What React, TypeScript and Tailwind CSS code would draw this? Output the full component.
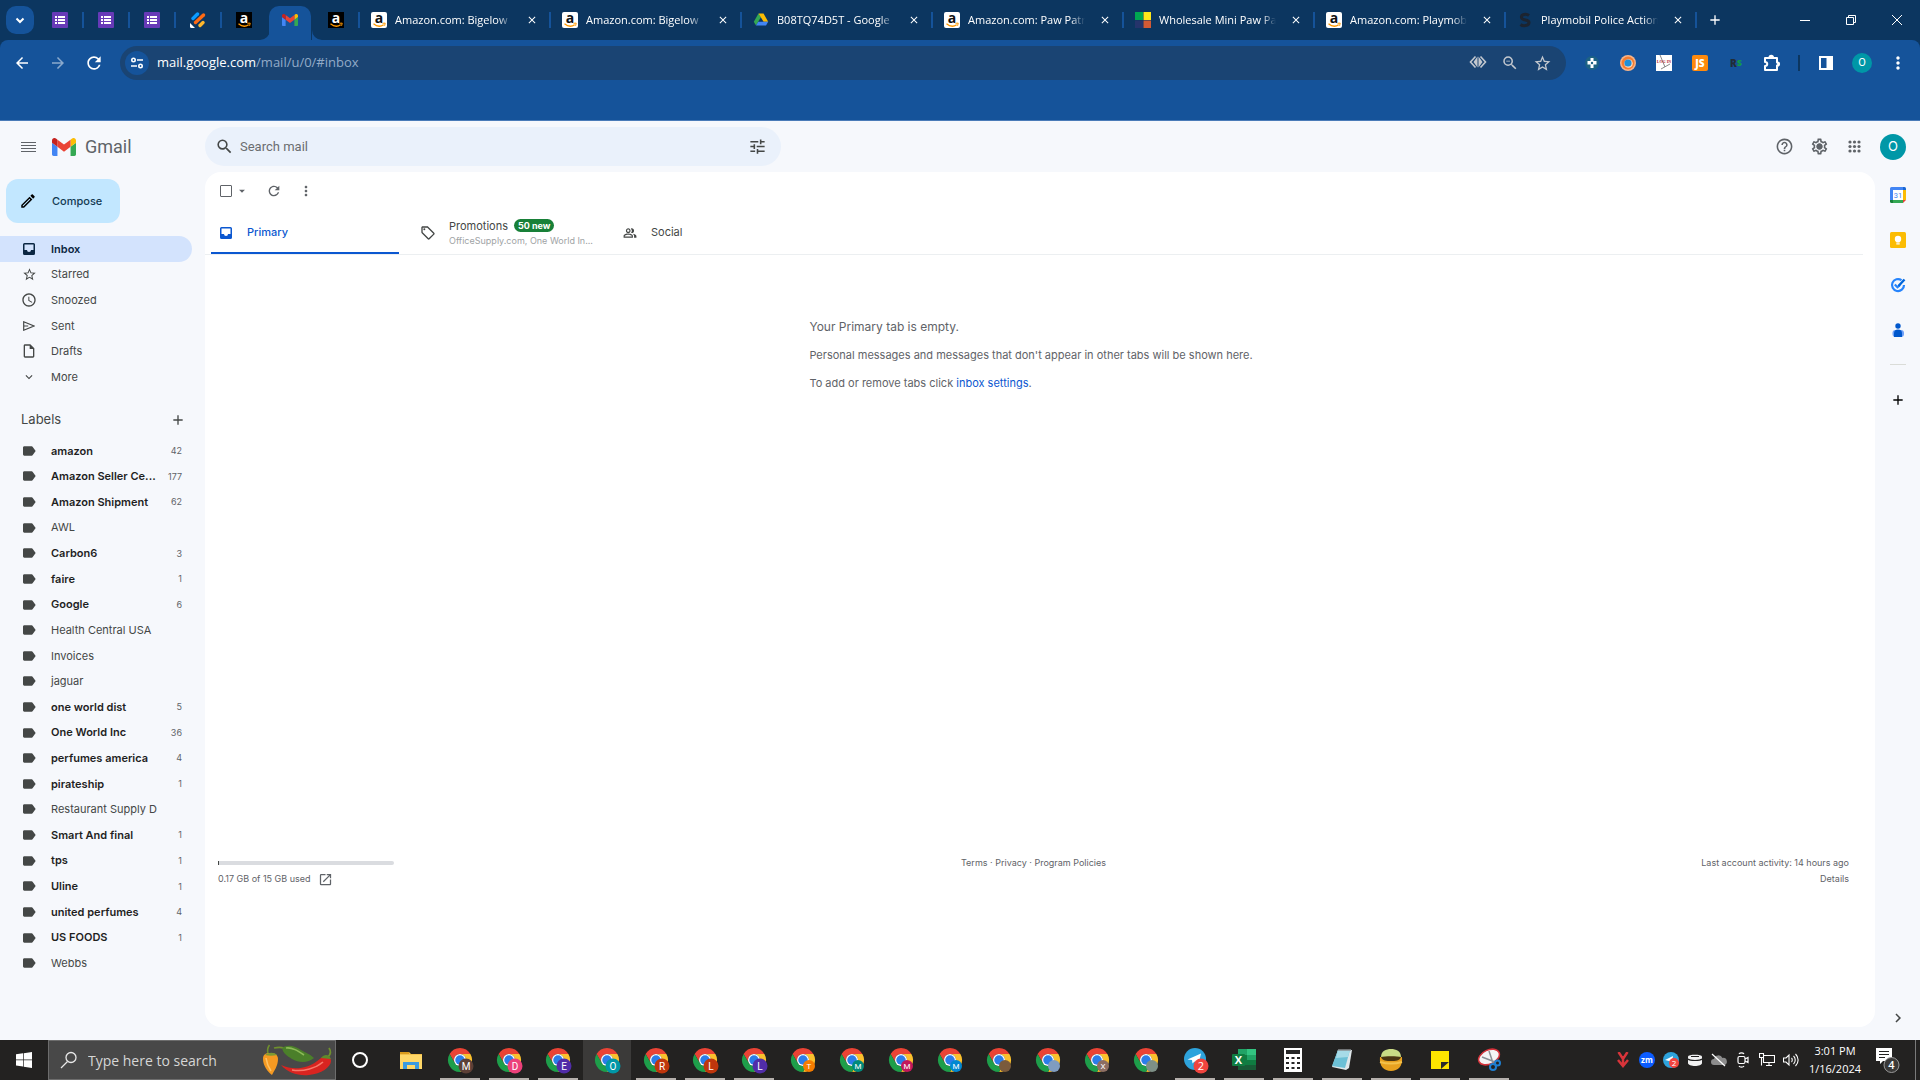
import React from 'react';
import {
  MdAccessTime,
  MdAdd,
  MdArrowBack,
  MdArrowDropDown,
  MdArrowForward,
  MdChevronRight,
  MdClose,
  MdExpandMore,
  MdLabel,
  MdMoreVert,
  MdOutlineEdit,
  MdOutlineHelpOutline,
  MdOutlineInsertDriveFile,
  MdOutlineLocalOffer,
  MdOutlineOpenInNew,
  MdOutlinePeopleAlt,
  MdOutlineSettings,
  MdRefresh,
  MdSearch,
  MdStarBorder,
  MdTune,
  MdZoomOut,
} from 'react-icons/md';

/* ---------- favicons ---------- */

function FormsIcon() {
  return (
    <svg viewBox="0 0 16 16" className="size-4">
      <rect width="16" height="16" rx="1" fill="#673ab7" />
      <path d="M3 4h2v2H3zM6 4h7v2H6zM3 7h2v2H3zM6 7h7v2H6zM3 10h2v2H3zM6 10h7v2H6z" fill="#fff" />
    </svg>
  );
}

function FeedIcon() {
  return (
    <svg viewBox="0 0 16 16" className="size-4" strokeWidth="3.4" strokeLinecap="round">
      <path d="M3 6.5L7.5 2" stroke="#0a9bff" />
      <path d="M5.5 10.5L13.5 3" stroke="#ff6a13" />
      <path d="M10 13.5L13 10.5" stroke="#ffb72b" />
      <path d="M0 11l5 5H1.5A1.5 1.5 0 0 1 0 14.500z" fill="#fff" />
    </svg>
  );
}

function AmazonIcon({ dark = false }: { dark?: boolean }) {
  return (
    <svg viewBox="0 0 16 16" className="size-4 overflow-visible">
      <rect width="16" height="16" rx={dark ? 0 : 2} fill={dark ? '#000' : '#fff'} />
      <text
        x="8"
        y="10.500"
        textAnchor="middle"
        fontFamily="Open Sans, sans-serif"
        fontWeight="700"
        fontSize="14"
        fill={dark ? '#fff' : '#111'}
      >
        a
      </text>
      <path d="M2.500 11.800c3.500 2.900 7.600 2.700 10.200 1" fill="none" stroke="#ff9900" strokeWidth="1.300" />
      <path d="M11.500 11.300l2.700-.2-.6 2.700" fill="none" stroke="#ff9900" strokeWidth="1" />
    </svg>
  );
}

function GmailLogo({ className }: { className: string }) {
  return (
    <svg viewBox="52 42 88 66" className={className}>
      <path fill="#4285f4" d="M58 108h14V74L52 59v43c0 3.320 2.690 6 6 6" />
      <path fill="#34a853" d="M120 108h14c3.320 0 6-2.690 6-6V59l-20 15" />
      <path fill="#fbbc04" d="M120 48v26l20-15v-8c0-7.420-8.470-11.650-14.400-7.200" />
      <path fill="#ea4335" d="M72 74V48l24 18 24-18v26L96 92" />
      <path fill="#c5221f" d="M52 51v8l20 15V48l-5.600-4.200c-5.940-4.450-14.400-.22-14.400 7.200" />
    </svg>
  );
}

function DriveIcon() {
  return (
    <svg viewBox="0 0 16 16" className="size-4">
      <path d="M5.500 1.500L.8 9.700 3 13.500 8 5z" fill="#34a853" />
      <path d="M5.500 1.500h5L15.200 9.700h-4.600z" fill="#fbbc04" />
      <path d="M3 13.500l2.300-3.800h9.900L13 13.500z" fill="#4285f4" />
    </svg>
  );
}

function MosaicIcon() {
  return (
    <svg viewBox="0 0 16 16" className="size-4">
      <path d="M0 0h8v8H0z" fill="#00a651" />
      <path d="M8.500 0H16v8H8.500z" fill="#ffe81a" />
      <path d="M0 8.500h8V16H0z" fill="#25346b" />
      <path d="M8.500 8.500H16V16H8.500z" fill="#d35a35" />
    </svg>
  );
}

function SwirlIcon() {
  return (
    <svg viewBox="0 0 16 16" className="size-4" fill="none" stroke="#1c2430">
      <path d="M12 3.500C9.500 1.500 4 2 4.500 5.500S12 7 12 10.500 6 14.500 3.500 12.500" strokeWidth="3" />
      <path d="M10.500 5C9 3.800 6 4 6.500 5.800" stroke="#0c3660" strokeWidth=".6" />
    </svg>
  );
}

/* ---------- browser chrome ---------- */

const wideTabs = [
  { title: 'Amazon.com: Bigelow', icon: <AmazonIcon /> },
  { title: 'Amazon.com: Bigelow', icon: <AmazonIcon /> },
  { title: 'B08TQ74D5T - Google', icon: <DriveIcon /> },
  { title: 'Amazon.com: Paw Patr', icon: <AmazonIcon /> },
  { title: 'Wholesale Mini Paw Pa', icon: <MosaicIcon /> },
  { title: 'Amazon.com: Playmob', icon: <AmazonIcon /> },
  { title: 'Playmobil Police Action', icon: <SwirlIcon /> },
];

function PinnedTab({ icon, divider = true }: { icon: React.ReactNode; divider?: boolean }) {
  return (
    <div className="flex h-7 w-[46px] items-center">
      <button className="flex flex-1 justify-center">{icon}</button>
      <span className={divider ? 'h-4 w-[2px] bg-[#15539a]' : 'h-4 w-[2px]'} />
    </div>
  );
}

function TabStrip() {
  return (
    <div className="flex h-10 items-center bg-[#0c3660] pl-[6px] text-white">
      <button aria-label="Search tabs" className="mr-1 flex size-7 items-center justify-center rounded-[10px] bg-[#15539a]">
        <svg viewBox="0 0 10 10" className="size-[10px]" fill="none" stroke="#fff" strokeWidth="2">
          <path d="M1.500 3.500L5 7l3.500-3.500" />
        </svg>
      </button>
      <PinnedTab icon={<FormsIcon />} />
      <PinnedTab icon={<FormsIcon />} />
      <PinnedTab icon={<FormsIcon />} />
      <PinnedTab icon={<FeedIcon />} />
      <PinnedTab icon={<AmazonIcon dark />} divider={false} />
      <div className="relative flex h-10 w-[46px] items-end pr-[2px]">
        <button className="mx-px flex h-[34px] flex-1 items-center justify-center rounded-t-[10px] bg-[#15539a] pb-[6px]">
          <GmailLogo className="h-3 w-4" />
        </button>
        <svg viewBox="0 0 10 10" className="absolute bottom-0 -left-2 size-[10px]">
          <path d="M10 0v10H0A10 10 0 0 0 10 0" fill="#15539a" />
        </svg>
        <svg viewBox="0 0 10 10" className="absolute -right-2 bottom-0 size-[10px]">
          <path d="M0 0v10h10A10 10 0 0 1 0 0" fill="#15539a" />
        </svg>
      </div>
      <PinnedTab icon={<AmazonIcon dark />} />
      {wideTabs.map((tab, i) => (
        <div key={i} className="flex h-7 w-[191px] min-w-0 items-center">
          <button className="ml-[11px] flex min-w-0 flex-1 items-center gap-2">
            <span className="shrink-0">{tab.icon}</span>
            <span className="min-w-0 flex-1 text-left font-['Open_Sans',sans-serif] text-[11px] leading-5 whitespace-nowrap [mask-image:linear-gradient(to_right,black_88%,transparent)]">
              {tab.title}
            </span>
          </button>
          <button aria-label="Close tab" className="mr-[9px] ml-3 flex size-4 items-center justify-center">
            <MdClose className="size-3" />
          </button>
          <span className="h-4 w-[2px] bg-[#15539a]" />
        </div>
      ))}
      <button aria-label="New tab" className="ml-[10px] flex size-4 items-center justify-center">
        <MdAdd className="size-4" />
      </button>
      <div className="ml-auto flex">
        <button aria-label="Minimize" className="flex h-10 w-[46px] items-center justify-center">
          <span className="h-px w-[10px] bg-white" />
        </button>
        <button aria-label="Restore" className="flex h-10 w-[46px] items-center justify-center">
          <svg viewBox="0 0 10 10" className="size-[10px]" fill="none" stroke="#fff">
            <path d="M.5 2.500h7v7h-7zM2.500 2.500v-2h7v7h-2" />
          </svg>
        </button>
        <button aria-label="Close" className="flex h-10 w-[46px] items-center justify-center">
          <svg viewBox="0 0 10 10" className="size-[10px]" stroke="#fff">
            <path d="M0 0l10 10M10 0L0 10" />
          </svg>
        </button>
      </div>
    </div>
  );
}

function ToolButton({ label, children }: { label: string; children: React.ReactNode }) {
  return (
    <button aria-label={label} className="flex h-8 w-9 items-center justify-center">
      {children}
    </button>
  );
}

function Toolbar() {
  return (
    <div className="h-[81px] border-b border-[#4a7bb8] bg-[#0c3660]">
      <div className="flex h-20 items-start rounded-t-lg bg-[#15539a] pt-[6px] pl-1 text-white">
        <div className="flex h-[34px] items-center">
          <ToolButton label="Back"><MdArrowBack className="size-[18px]" /></ToolButton>
          <ToolButton label="Forward"><MdArrowForward className="size-[18px] opacity-50" /></ToolButton>
          <ToolButton label="Reload"><MdRefresh className="size-5" /></ToolButton>
        </div>
        <div className="ml-2 flex h-[34px] flex-1 items-center rounded-full bg-[#1a4473] pl-[5px]">
          <button aria-label="Site information" className="flex size-6 items-center justify-center rounded-full bg-[#15539a]">
            <svg viewBox="0 0 14 14" className="size-[14px]" fill="none" stroke="#fff" strokeWidth="1.600">
              <circle cx="3.500" cy="4" r="1.700" />
              <path d="M7 4h6M1 10h6" />
              <circle cx="10.500" cy="10" r="1.700" />
            </svg>
          </button>
          {/* typed url, with the path dimmed */}
          <div className="ml-2 flex-1 font-['Open_Sans',sans-serif] text-[13px]">
            mail.google.com<span className="text-[#93abc8]">/mail/u/0/#inbox</span>
          </div>
          <div className="mr-2 flex text-[#c3c8cf]">
            <button aria-label="Sync" className="flex w-8 justify-center">
              <svg viewBox="0 0 18 16" className="h-4 w-[18px]" fill="none" stroke="currentColor" strokeWidth="1.600">
                <path d="M6.500 2.500L1.500 8l5 5.500M11.500 2.500l5 5.500-5 5.500" />
                <path d="M8.500 2.500L4.500 8l4 5.500zM9.500 2.500L13.500 8l-4 5.500z" fill="currentColor" stroke="none" />
              </svg>
            </button>
            <button aria-label="Zoom" className="flex w-8 justify-center"><MdZoomOut className="size-[18px]" /></button>
            <button aria-label="Bookmark" className="flex w-8 justify-center"><MdStarBorder className="size-[19px]" /></button>
          </div>
        </div>
        <div className="ml-2 flex h-[34px] items-center pr-1">
          <ToolButton label="Helium extension">
            <svg viewBox="0 0 16 16" className="size-4">
              <circle cx="8" cy="8" r="7" fill="#1d6284" />
              <path d="M6.500 3h3v3h3v3.500h-3V13h-3V9.500h-3V6h3z" fill="#fff" />
              <circle cx="8" cy="8" r="1.200" fill="#1d6284" />
            </svg>
          </ToolButton>
          <ToolButton label="Fox extension">
            <svg viewBox="0 0 16 16" className="size-4">
              <circle cx="8" cy="8" r="8" fill="#f7b58a" />
              <circle cx="8" cy="8" r="6.500" fill="#f47d31" />
              <circle cx="8.500" cy="8.500" r="4.300" fill="#fcd9bd" />
              <circle cx="8" cy="8" r="3.600" fill="#1e8fd8" />
            </svg>
          </ToolButton>
          <ToolButton label="Log in extension">
            <svg viewBox="0 0 16 16" className="size-4">
              <rect width="16" height="16" fill="#fff" />
              <path d="M4 0l5 12M5 14l9-5" stroke="#888" strokeWidth="1" />
              <text x="8" y="8" textAnchor="middle" fontSize="4" fontWeight="700" fontFamily="Liberation Serif, serif" fill="#b3202a">
                LOG IN
              </text>
            </svg>
          </ToolButton>
          <ToolButton label="JS extension">
            <span className="flex size-4 items-center justify-center rounded-xs bg-[#ff8a0c] font-['Open_Sans',sans-serif] text-[10px] font-extrabold">
              JS
            </span>
          </ToolButton>
          <ToolButton label="RS extension">
            <span className="flex font-['Open_Sans',sans-serif] text-[10px] leading-4 font-extrabold text-[#222c35]">
              R<span className="text-[9px] text-[#129a45]">S</span>
            </span>
          </ToolButton>
          <ToolButton label="Extensions">
            <svg viewBox="0 0 18 18" className="size-[18px]" fill="none" stroke="#fff" strokeWidth="2" strokeLinejoin="round">
              <path d="M2 4h12v4.500a1.500 1.500 0 0 1 0 3V16H2v-4c3 0 3-4 0-4z" />
              <path d="M6.500 3.500a1.800 1.800 0 0 1 3.600 0M14.500 8.500a1.600 1.600 0 0 1 0 3.200" fill="#fff" />
            </svg>
          </ToolButton>
          <span className="mx-2 h-4 w-[2px] bg-[#0c3660]" />
          <ToolButton label="Side panel">
            <svg viewBox="0 0 16 16" className="size-4">
              <path d="M2 2h12v12H2z" fill="none" stroke="#fff" strokeWidth="2" />
              <path d="M8.500 2H14v12H8.500z" fill="#fff" />
            </svg>
          </ToolButton>
          <ToolButton label="Profile">
            <span className="flex size-5 items-center justify-center rounded-full bg-[#0097a7] font-['Roboto',sans-serif] text-[11px]">O</span>
          </ToolButton>
          <ToolButton label="Browser menu"><MdMoreVert className="size-5" /></ToolButton>
        </div>
      </div>
    </div>
  );
}

/* ---------- gmail ---------- */

function InboxIcon() {
  return (
    <svg viewBox="0 0 12 12" className="size-3">
      <path
        fillRule="evenodd"
        d="M1.500 0h9A1.500 1.500 0 0 1 12 1.500v9a1.500 1.500 0 0 1-1.500 1.500h-9A1.500 1.500 0 0 1 0 10.500v-9A1.500 1.500 0 0 1 1.500 0M1.500 1.500V7H4a2 2 0 0 0 4 0h2.500V1.500z"
        fill="currentColor"
      />
    </svg>
  );
}

function SentIcon() {
  return (
    <svg viewBox="0 0 12 10" className="h-[10px] w-3" fill="none" stroke="currentColor" strokeWidth="1.200">
      <path d="M.7.800L11 5 .7 9.200zM.7 5h4.500" />
    </svg>
  );
}

function Header() {
  return (
    <header className="flex h-[51px] items-center">
      <div className="flex w-[205px] items-center">
        <button aria-label="Main menu" className="ml-[21px]">
          <svg viewBox="0 0 15 10" className="h-[10px] w-[15px]" stroke="#5f6368">
            <path d="M0 .5h15M0 3.500h15M0 6.500h15M0 9.500h15" />
          </svg>
        </button>
        <a href="#inbox" className="ml-4 flex items-center gap-[9px]">
          <GmailLogo className="h-[18px] w-6" />
          <span className="font-['Roboto',sans-serif] text-lg leading-6 text-[#5f6368]">Gmail</span>
        </a>
      </div>
      <form className="flex h-[39px] w-[30%] items-center rounded-full bg-[#eaf1fb]">
        <button type="button" aria-label="Search" className="ml-[10px]">
          <MdSearch className="size-[19px] text-[#444746]" />
        </button>
        <input
          aria-label="Search mail"
          placeholder="Search mail"
          className="ml-[6px] min-w-0 flex-1 bg-transparent font-['Roboto',sans-serif] text-[13px] outline-none placeholder:text-[#6a6d70]"
        />
        <button type="button" aria-label="Search options" className="mr-[14px]">
          <MdTune className="size-[19px] text-[#444746]" />
        </button>
      </form>
      <div className="ml-auto flex items-center pr-[14px] text-[#5f6368]">
        <button aria-label="Support" className="flex w-[35px] justify-center"><MdOutlineHelpOutline className="size-[19px]" /></button>
        <button aria-label="Settings" className="flex w-[35px] justify-center">
          <svg viewBox="0 0 24 24" className="size-[19px]">
            <MdOutlineSettings size={24} />
            <circle cx="12" cy="12" r="3.500" fill="currentColor" />
          </svg>
        </button>
        <button aria-label="Google apps" className="flex w-[35px] justify-center">
          <svg viewBox="0 0 13 13" className="size-[13px]" fill="currentColor">
            {[2, 6.5, 11].map((y) => [2, 6.5, 11].map((x) => <circle key={x + '-' + y} cx={x} cy={y} r="1.600" />))}
          </svg>
        </button>
        <button aria-label="Account" className="ml-2 flex size-[26px] items-center justify-center rounded-full bg-[#0097a7] text-[13px] text-white">
          O
        </button>
      </div>
    </header>
  );
}

const folders = [
  { name: 'Inbox', icon: <InboxIcon />, active: true },
  { name: 'Starred', icon: <MdStarBorder className="size-[15px]" /> },
  { name: 'Snoozed', icon: <MdAccessTime className="size-4" /> },
  { name: 'Sent', icon: <SentIcon /> },
  { name: 'Drafts', icon: <MdOutlineInsertDriveFile className="size-4" /> },
  { name: 'More', icon: <MdExpandMore className="size-[14px]" /> },
];

const labels: { name: string; count?: number }[] = [
  { name: 'amazon', count: 42 },
  { name: 'Amazon Seller Ce...', count: 177 },
  { name: 'Amazon Shipment', count: 62 },
  { name: 'AWL' },
  { name: 'Carbon6', count: 3 },
  { name: 'faire', count: 1 },
  { name: 'Google', count: 6 },
  { name: 'Health Central USA' },
  { name: 'Invoices' },
  { name: 'jaguar' },
  { name: 'one world dist', count: 5 },
  { name: 'One World Inc', count: 36 },
  { name: 'perfumes america', count: 4 },
  { name: 'pirateship', count: 1 },
  { name: 'Restaurant Supply D' },
  { name: 'Smart And final', count: 1 },
  { name: 'tps', count: 1 },
  { name: 'Uline', count: 1 },
  { name: 'united perfumes', count: 4 },
  { name: 'US FOODS', count: 1 },
  { name: 'Webbs' },
];

function Sidebar() {
  return (
    <aside className="w-[205px] shrink-0 text-[11px] text-[#444746]">
      <button className="mt-[7px] ml-[6px] flex h-11 w-[114px] items-center gap-[15px] rounded-xl bg-[#c2e7ff] pl-[13px] font-medium text-[#123a52]">
        <MdOutlineEdit className="size-[18px] text-black" />
        Compose
      </button>
      <nav className="mt-[13px] grid h-[154px] auto-rows-fr">
        {folders.map((f) => (
          <a
            key={f.name}
            href={'#' + f.name.toLowerCase()}
            className={
              f.active
                ? 'flex w-48 items-center gap-[13px] rounded-r-full bg-[#d3e3fd] pl-5 font-semibold text-[#0b2742]'
                : 'flex w-48 items-center gap-[13px] pl-5'
            }
          >
            <span className="flex w-[18px] justify-center">{f.icon}</span>
            {f.name}
          </a>
        ))}
      </nav>
      <div className="mt-[14px] flex h-8 items-center justify-between pr-[19px] pl-[21px]">
        <h2 className="text-[13px]">Labels</h2>
        <button aria-label="Create new label"><MdAdd className="size-4" /></button>
      </div>
      <nav className="mt-[2px] grid h-[538px] auto-rows-fr">
        {labels.map((l) => (
          <a key={l.name} href="#label" className="flex w-48 items-center gap-[13px] pr-[10px] pl-5">
            <span className="flex w-[18px] justify-center"><MdLabel className="size-4" /></span>
            <span className={l.count ? 'flex-1 font-semibold whitespace-nowrap text-[#1f1f1f]' : 'flex-1 whitespace-nowrap'}>{l.name}</span>
            {l.count && <span className="-ml-3 text-[9px] text-[#5f6368]">{l.count}</span>}
          </a>
        ))}
      </nav>
    </aside>
  );
}

function Mailbox() {
  return (
    <main className="mb-[13px] flex-1 rounded-2xl bg-white">
      <div className="flex h-9 items-center pt-[2px] pl-[15px] text-[#5f6368]">
        <input
          type="checkbox"
          aria-label="Select"
          className="size-3 appearance-none rounded-[1px] border border-[#5f6368] bg-white"
        />
        <button aria-label="Select options" className="ml-[3px]"><MdArrowDropDown className="size-[14px]" /></button>
        <button aria-label="Refresh" className="ml-[17px]"><MdRefresh className="size-4" /></button>
        <button aria-label="More" className="ml-4"><MdMoreVert className="size-4" /></button>
      </div>
      <div role="tablist" className="mr-3 flex h-[47px] gap-[14px] border-b border-[#eceff1] pl-[6px] text-[11px] text-[#444746]">
        <button role="tab" aria-selected="true" className="flex w-[188px] items-center gap-[15px] border-b-2 border-[#0b57d0] pt-[5px] pl-[9px] font-medium text-[#0b57d0]">
          <InboxIcon />
          Primary
        </button>
        <button role="tab" aria-selected="false" className="flex w-[188px] items-center gap-[13px] pt-[3px] pl-[7px] text-left">
          <MdOutlineLocalOffer className="size-4 shrink-0" />
          <span className="leading-4">
            <span className="flex items-center gap-[6px]">
              Promotions
              <span className="rounded-full bg-[#188038] px-1 text-[9px] leading-[13px] font-bold text-white">50 new</span>
            </span>
            <span className="block text-[9px] leading-[14px] whitespace-nowrap text-[#a0a3a5]">OfficeSupply.com, One World In...</span>
          </span>
        </button>
        <button role="tab" aria-selected="false" className="flex w-[188px] items-center gap-[14px] pt-[3px] pl-2">
          <MdOutlinePeopleAlt className="size-[14px]" />
          Social
        </button>
      </div>
      <div className="mx-auto mt-[62px] w-fit space-y-2 pr-[18px] text-[11px] leading-5 text-[#5f6368]">
        <p className="text-xs leading-5">Your Primary tab is empty.</p>
        <p>Personal messages and messages that don't appear in other tabs will be shown here.</p>
        <p>
          To add or remove tabs click <a href="#settings" className="text-[#0b57d0]">inbox settings</a>.
        </p>
      </div>
      <footer className="mt-[462px] grid grid-cols-3 pr-[26px] pl-[13px] text-[9px] leading-4 text-[#5f6368]">
        <div>
          <div className="flex h-4 items-center">
            <div className="h-1 w-44 rounded-r-full border-l border-[#444746] bg-[#dadce0]" />
          </div>
          <div className="flex items-center gap-[7px]">
            0.17 GB of 15 GB used
            <a href="#storage" aria-label="Manage storage"><MdOutlineOpenInNew className="size-[15px]" /></a>
          </div>
        </div>
        <div className="text-center">
          <a href="#terms">Terms</a> · <a href="#privacy">Privacy</a> · <a href="#policies">Program Policies</a>
        </div>
        <div className="text-right">
          <p>Last account activity: 14 hours ago</p>
          <a href="#details">Details</a>
        </div>
      </footer>
    </main>
  );
}

function PanelButton({ label, children }: { label: string; children: React.ReactNode }) {
  return (
    <button aria-label={label} className="flex h-[45px] w-full items-center justify-center">
      {children}
    </button>
  );
}

function SidePanel() {
  return (
    <aside className="flex w-[45px] shrink-0 flex-col items-center">
      <PanelButton label="Calendar">
        <svg viewBox="0 0 16 16" className="size-4">
          <path d="M0 1.500A1.500 1.500 0 0 1 1.500 0H13v3H3v10H0z" fill="#4285f4" />
          <path d="M13 0h1.500A1.500 1.500 0 0 1 16 1.500V3h-3z" fill="#1967d2" />
          <path d="M13 3h3v10h-3z" fill="#fbbc04" />
          <path d="M0 13h3v3H1.500A1.500 1.500 0 0 1 0 14.500z" fill="#188038" />
          <path d="M3 13h10v3H3z" fill="#34a853" />
          <path d="M13 13h3l-3 3z" fill="#ea4335" />
          <path d="M3 3h10v10H3z" fill="#fff" />
          <text x="8" y="10.800" textAnchor="middle" fontSize="7.500" fontFamily="Roboto, sans-serif" fill="#4285f4">31</text>
        </svg>
      </PanelButton>
      <PanelButton label="Keep">
        <svg viewBox="0 0 16 16" className="size-4">
          <rect width="16" height="16" rx="1.500" fill="#fbbc04" />
          <circle cx="8" cy="7" r="3.200" fill="#fff" />
          <path d="M6.300 9h3.400v1.600H6.300zM6.300 11.200h3.400v1.300H6.300z" fill="#fff" />
        </svg>
      </PanelButton>
      <PanelButton label="Tasks">
        <svg viewBox="0 0 16 16" className="size-4" fill="none">
          <path d="M11.500 3.200A6 6 0 1 0 14 8" stroke="#2684fc" strokeWidth="2.200" />
          <path d="M4.800 7.500L7.500 10.200 10 8" stroke="#2684fc" strokeWidth="2.200" />
          <path d="M8.500 9L14.500 2.500" stroke="#0066da" strokeWidth="2.400" />
        </svg>
      </PanelButton>
      <PanelButton label="Contacts">
        <svg viewBox="0 0 16 16" className="size-4">
          <circle cx="8" cy="4" r="2.700" fill="#0057cc" />
          <rect x="2.500" y="8" width="11.500" height="7" rx="3" fill="#6ea0f8" />
          <path d="M4 15v-3.500A4 4 0 0 1 12 11.500V15z" fill="#0057cc" />
        </svg>
      </PanelButton>
      <span className="mt-3 h-px w-4 bg-[#dadcd8]" />
      <div className="mt-3 w-full">
        <PanelButton label="Get add-ons"><MdAdd className="size-4 text-black" /></PanelButton>
      </div>
      <button aria-label="Hide side panel" className="mt-auto mb-[13px]"><MdChevronRight className="size-[18px] text-[#444746]" /></button>
    </aside>
  );
}

/* ---------- taskbar ---------- */

function ChromeIcon({ letter, color, small }: { letter: string; color: string; small?: boolean }) {
  return (
    <svg viewBox="0 0 32 32" className="size-8">
      <g transform="translate(4 4) scale(.5)">
        <path d="M24 12H44.800A24 24 0 0 0 3.200 12L13.600 30A12 12 0 0 1 24 12Z" fill="#ea4335" />
        <path d="M44.800 12H24A12 12 0 0 1 34.400 30L24 48A24 24 0 0 0 44.800 12" fill="#fbc02d" />
        <path d="M3.200 12L13.600 30A12 12 0 0 0 34.400 30L24 48A24 24 0 0 1 3.200 12" fill="#1e9e4a" />
        <circle cx="24" cy="24" r="12" fill="#fff" />
        <circle cx="24" cy="24" r="9.500" fill="#2b7de9" />
      </g>
      <circle cx="22" cy="22" r={small ? 6 : 7.5} fill={color} />
      <text x="22" y={small ? 25 : 26} textAnchor="middle" fontSize={small ? 8 : 10} fontFamily="Roboto, sans-serif" fill="#fff">
        {letter}
      </text>
    </svg>
  );
}

function PeppersIcon() {
  return (
    <svg viewBox="0 0 72 36" className="h-9 w-[72px]" fill="none">
      <path d="M6 12C5 8 6 5 7.500 3" stroke="#6f8f2e" strokeWidth="1.600" />
      <path d="M1 17c0-5 3-6 7-6 5 0 8 2 8 6 0 7-4 12-6 16C6 30 1 24 1 17" fill="#f59a22" />
      <path d="M4 16c1 7 3 10 5 13" stroke="#ffc263" strokeWidth="1.600" />
      <path d="M3 13c4-3 9-3 12 0-4 1-8 1-12 0" fill="#7d9a33" />
      <path d="M12 6c4-1 7-1 10 0" stroke="#6f8f2e" strokeWidth="1.800" />
      <path d="M20 6c6-4 13-2 19 2 5 3 9 4 13 8-6 5-15 5-22 1-5-3-9-6-10-11" fill="#4b7f2a" />
      <path d="M24 6c6-1 12 3 18 7" stroke="#8dbb57" strokeWidth="1.600" />
      <path d="M66 15c3-3 3-6 1-9" stroke="#6f8f2e" strokeWidth="1.800" />
      <path d="M59 16c5-4 10-1 10 3 0 6-10 13-22 14-11 1-21-2-28-10 9 4 17 4 24 2 8-2 11-5 16-9" fill="#d92420" />
      <path d="M30 28c12 2 24-2 31-8" stroke="#f7786a" strokeWidth="1.600" />
      <path d="M59 16c3-4 8-4 10 1-4 0-6-1-10-1" fill="#5d8a2c" />
    </svg>
  );
}

const apps: { name: string; icon: React.ReactNode; open?: boolean; active?: boolean }[] = [
  {
    name: 'File Explorer',
    icon: (
      <svg viewBox="0 0 24 24" className="size-6">
        <path d="M1 4h9l2 2h11v15H1z" fill="#f3c14b" />
        <path d="M1 7h22v14H1z" fill="#ffd868" />
        <path d="M1 4h9v2H1z" fill="#d99b1c" />
        <path d="M4 21v-7h16v7h-4v-4H8v4z" fill="#3a9be0" />
      </svg>
    ),
  },
  { name: 'Chrome M', icon: <ChromeIcon letter="M" color="#5d4037" />, open: true },
  { name: 'Chrome D', icon: <ChromeIcon letter="D" color="#ec407a" />, open: true },
  { name: 'Chrome E', icon: <ChromeIcon letter="E" color="#512da8" />, open: true },
  { name: 'Chrome O', icon: <ChromeIcon letter="O" color="#0097a7" />, active: true },
  { name: 'Chrome R', icon: <ChromeIcon letter="R" color="#bf360c" />, open: true },
  { name: 'Chrome L', icon: <ChromeIcon letter="L" color="#bf360c" />, open: true },
  { name: 'Chrome L2', icon: <ChromeIcon letter="L" color="#512da8" />, open: true },
  { name: 'Chrome T', icon: <ChromeIcon letter="T" color="#f57c00" small /> },
  { name: 'Chrome M2', icon: <ChromeIcon letter="M" color="#00897b" small /> },
  { name: 'Chrome M3', icon: <ChromeIcon letter="M" color="#c2185b" small /> },
  { name: 'Chrome M4', icon: <ChromeIcon letter="M" color="#0288d1" small /> },
  { name: 'Chrome photo', icon: <ChromeIcon letter="" color="#7a5a3c" small /> },
  { name: 'Chrome cat', icon: <ChromeIcon letter="" color="#7f9cc0" small /> },
  { name: 'Chrome X', icon: <ChromeIcon letter="X" color="#8d6e63" small /> },
  { name: 'Chrome beach', icon: <ChromeIcon letter="" color="#7d8f86" small /> },
  {
    name: 'Telegram',
    open: true,
    icon: (
      <svg viewBox="0 0 32 32" className="size-8">
        <circle cx="16" cy="15" r="11" fill="#2ea3dc" />
        <path d="M8.500 15.500L22 9.500l-2.500 11-4-3-2 2-.5-3.500z" fill="#fff" />
        <circle cx="22" cy="22" r="7.500" fill="#f0443e" />
        <text x="22" y="26" textAnchor="middle" fontSize="11" fontFamily="Open Sans, sans-serif" fill="#fff">2</text>
      </svg>
    ),
  },
  {
    name: 'Excel',
    open: true,
    icon: (
      <svg viewBox="0 0 24 24" className="size-6">
        <path d="M6 1h9v6H6z" fill="#21a366" />
        <path d="M15 1h9v6h-9z" fill="#33c481" />
        <path d="M6 7h9v10H6z" fill="#107c41" />
        <path d="M15 7h9v5h-9z" fill="#21a366" />
        <path d="M15 12h9v5h-9z" fill="#107c41" />
        <path d="M6 17h18v5H6z" fill="#185c37" />
        <rect y="6" width="13" height="12" rx="1" fill="#107c41" />
        <text x="6.500" y="16" textAnchor="middle" fontSize="11" fontWeight="700" fontFamily="Open Sans, sans-serif" fill="#fff">X</text>
      </svg>
    ),
  },
  {
    name: 'Calculator',
    open: true,
    icon: (
      <svg viewBox="0 0 18 24" className="h-6 w-[18px]">
        <path d="M0 0h18v24H0z" fill="#fff" />
        <path d="M2 2h14v4H2zM2 9h3v2H2zM7.500 9h3v2h-3zM13 9h3v2h-3zM2 14h3v2H2zM7.500 14h3v2h-3zM13 14h3v2h-3zM2 19h3v2H2zM7.500 19h3v2h-3zM13 19h3v2h-3z" fill="#262626" />
      </svg>
    ),
  },
  {
    name: 'Notepad',
    open: true,
    icon: (
      <svg viewBox="0 0 24 24" className="size-6">
        <path d="M8 2h14l-3 18-3 2-14-3z" fill="#dfe7ea" />
        <path d="M8 2h12l-5 18-13-2z" fill="#6cc0d6" />
        <path d="M8 2h12l-2 7-12 1z" fill="#a6dbe8" />
        <path d="M8 2h13" stroke="#8b8f92" strokeWidth="1.500" />
      </svg>
    ),
  },
  {
    name: 'Buyer app',
    open: true,
    icon: (
      <svg viewBox="0 0 24 24" className="size-6">
        <path d="M2 9C2 3 7 1 12 1s10 2 10 8z" fill="#c9db85" />
        <path d="M1 9h22c1 9-4 14-11 14S0 18 1 9" fill="#e8a11f" />
        <path d="M1 14c7 2 15 2 22 0" stroke="#f4c14a" strokeWidth="2" fill="none" />
        <path d="M2 9c4-1 16-1 20 0-1 4-6 4-10 4S3 13 2 9" fill="#4a3512" />
      </svg>
    ),
  },
  {
    name: 'Sticky Notes',
    open: true,
    icon: (
      <svg viewBox="0 0 18 18" className="size-[18px]">
        <path d="M0 0h18v18H0z" fill="#ffe600" />
        <path d="M10 18v-7h8z" fill="#2b2b2b" />
        <path d="M12 18l6-6v6z" fill="#ffe600" />
      </svg>
    ),
  },
  {
    name: 'Snipping Tool',
    open: true,
    icon: (
      <svg viewBox="0 0 24 24" className="size-6" fill="none">
        <ellipse cx="12" cy="9" rx="11" ry="7" transform="rotate(-25 12 9)" fill="#f4f4f4" stroke="#d6333b" strokeWidth="1.500" />
        <path d="M12 3l4 12M5 9l13 5" stroke="#8a8f94" strokeWidth="1.500" />
        <circle cx="16" cy="19" r="3" stroke="#1f7fd1" strokeWidth="2" />
        <circle cx="20.500" cy="15" r="2.500" stroke="#1f7fd1" strokeWidth="2" />
      </svg>
    ),
  },
];

const tray = [
  <svg viewBox="0 0 16 16" className="size-4" fill="none" stroke="#d8343a" strokeWidth="2.500">
    <path d="M3.500 0L8 7l4.500-7M3 8l5 6 5-6M8 4v9" />
  </svg>,
  <span className="flex size-4 items-center justify-center rounded-full bg-[#0b5cff] font-['Open_Sans',sans-serif] text-[8px] leading-3 font-bold">zm</span>,
  <svg viewBox="0 0 16 16" className="size-4">
    <circle cx="8" cy="8" r="8" fill="#2ea3dc" />
    <path d="M2 8l8-4-1 7-3-2z" fill="#fff" />
    <circle cx="11" cy="11" r="5" fill="#f0443e" />
    <text x="11" y="14" textAnchor="middle" fontSize="8" fontFamily="Open Sans, sans-serif" fill="#fff">2</text>
  </svg>,
  <svg viewBox="0 0 16 16" className="size-4">
    <path d="M1 4.500C1 2 15 2 15 4.500V11c0 4-14 4-14 0z" fill="#f2f2f2" />
    <path d="M1 7c2 2 12 2 14 0" stroke="#222" strokeWidth="1.200" fill="none" />
    <path d="M4 4.500h8" stroke="#222" strokeWidth="1" />
  </svg>,
  <svg viewBox="0 0 16 16" className="size-4">
    <path d="M3 13a3 3 0 0 1 0-6 4.500 4.500 0 0 1 8.500-1A3.500 3.500 0 0 1 13 13z" fill="#8c8c8c" />
    <path d="M1 2l13 12" stroke="#fff" strokeWidth="1.200" />
  </svg>,
  <svg viewBox="0 0 16 16" className="size-4" fill="none" stroke="#fff" strokeWidth="1.200">
    <rect x="3" y="4.500" width="7" height="7" rx="1.500" />
    <path d="M10 7l3-1.500v5L10 9M4 2c1-1.500 4-1.500 5 0M4 14c1 1.500 4 1.500 5 0" />
  </svg>,
  <svg viewBox="0 0 16 16" className="size-4" fill="none" stroke="#fff" strokeWidth="1.100">
    <path d="M4.500 3.500h11v7h-11zM10 10.500v3M7 13.500h6M.500 1.500h4v4h-4zM2.500 5.500v8" />
  </svg>,
  <svg viewBox="0 0 16 16" className="size-4" fill="none" stroke="#fff" strokeWidth="1.100">
    <path d="M.5 6h2.500l3-3v10l-3-3H.500zM8.500 6c1 1 1 3 0 4M10.500 4c2.300 2 2.300 6 0 8M12.500 2c3.500 3.500 3.500 8.500 0 12" />
  </svg>,
];

function Taskbar() {
  return (
    <div className="flex h-10 items-stretch bg-[#232221] font-['Open_Sans',sans-serif] text-white">
      <button aria-label="Start" className="flex w-12 items-center justify-center">
        <svg viewBox="0 0 16 16" className="size-4" fill="#fff">
          <path d="M0 2.300L7 1.300v6.200H0zM7.700 1.200L16 0v7.500H7.700zM0 8.300h7v6.300l-7-1zM7.700 8.300H16V16l-8.300-1.200z" />
        </svg>
      </button>
      <label className="flex w-[288px] items-center border border-[#6d6d6d] bg-[#484848] pr-px">
        <svg viewBox="0 0 18 18" className="ml-[11px] size-[18px]" fill="none" stroke="#e8e8e8" strokeWidth="1.300">
          <circle cx="11" cy="6.500" r="5" />
          <path d="M7.500 10.500L1 17" />
        </svg>
        <input
          aria-label="Search Windows"
          placeholder="Type here to search"
          className="ml-[10px] min-w-0 flex-1 bg-transparent pt-[2px] text-sm outline-none placeholder:text-[#d6d6d6]"
        />
        <PeppersIcon />
      </label>
      <button aria-label="Cortana" className="flex w-12 items-center justify-center">
        <span className="size-4 rounded-full border-2 border-white" />
      </button>
      <div className="ml-[3px] flex gap-px">
        {apps.map((app) => (
          <button
            key={app.name}
            aria-label={app.name}
            className={app.active ? 'relative flex w-12 items-center justify-center bg-[#3b3a39]' : 'relative flex w-12 items-center justify-center'}
          >
            {app.icon}
            {app.open && <span className="absolute inset-x-1 bottom-0 h-[2px] bg-[#b5b0ac]" />}
          </button>
        ))}
      </div>
      <div className="ml-auto flex items-center">
        {tray.map((icon, i) => (
          <button key={i} aria-label="Tray item" className="flex w-6 justify-center">{icon}</button>
        ))}
      </div>
      <button className="w-16 text-center text-[11px] leading-[18px] whitespace-nowrap">
        3:01 PM
        <br />
        1/16/2024
      </button>
      <button aria-label="Notifications" className="flex w-10 items-center justify-center">
        <svg viewBox="0 0 26 26" className="size-[26px]">
          <path d="M2 1h16v13H9l-3 3v-3H2z" fill="#fff" />
          <path d="M5 4.500h10M5 7.500h10M5 10.500h6" stroke="#232221" strokeWidth="1.200" />
          <circle cx="17.500" cy="18" r="7.500" fill="#3a3938" stroke="#9a9a9a" />
          <text x="17.500" y="22" textAnchor="middle" fontSize="11" fontWeight="600" fontFamily="Open Sans, sans-serif" fill="#fff">4</text>
        </svg>
      </button>
      <button aria-label="Show desktop" className="ml-2 w-[5px] border-l border-[#7a7a7a]" />
    </div>
  );
}

export default function App() {
  return (
    <div className="flex min-h-screen flex-col bg-[#f6f8fc] font-['Inter',sans-serif]">
      <TabStrip />
      <Toolbar />
      <Header />
      <div className="flex flex-1">
        <Sidebar />
        <Mailbox />
        <SidePanel />
      </div>
      <Taskbar />
    </div>
  );
}
